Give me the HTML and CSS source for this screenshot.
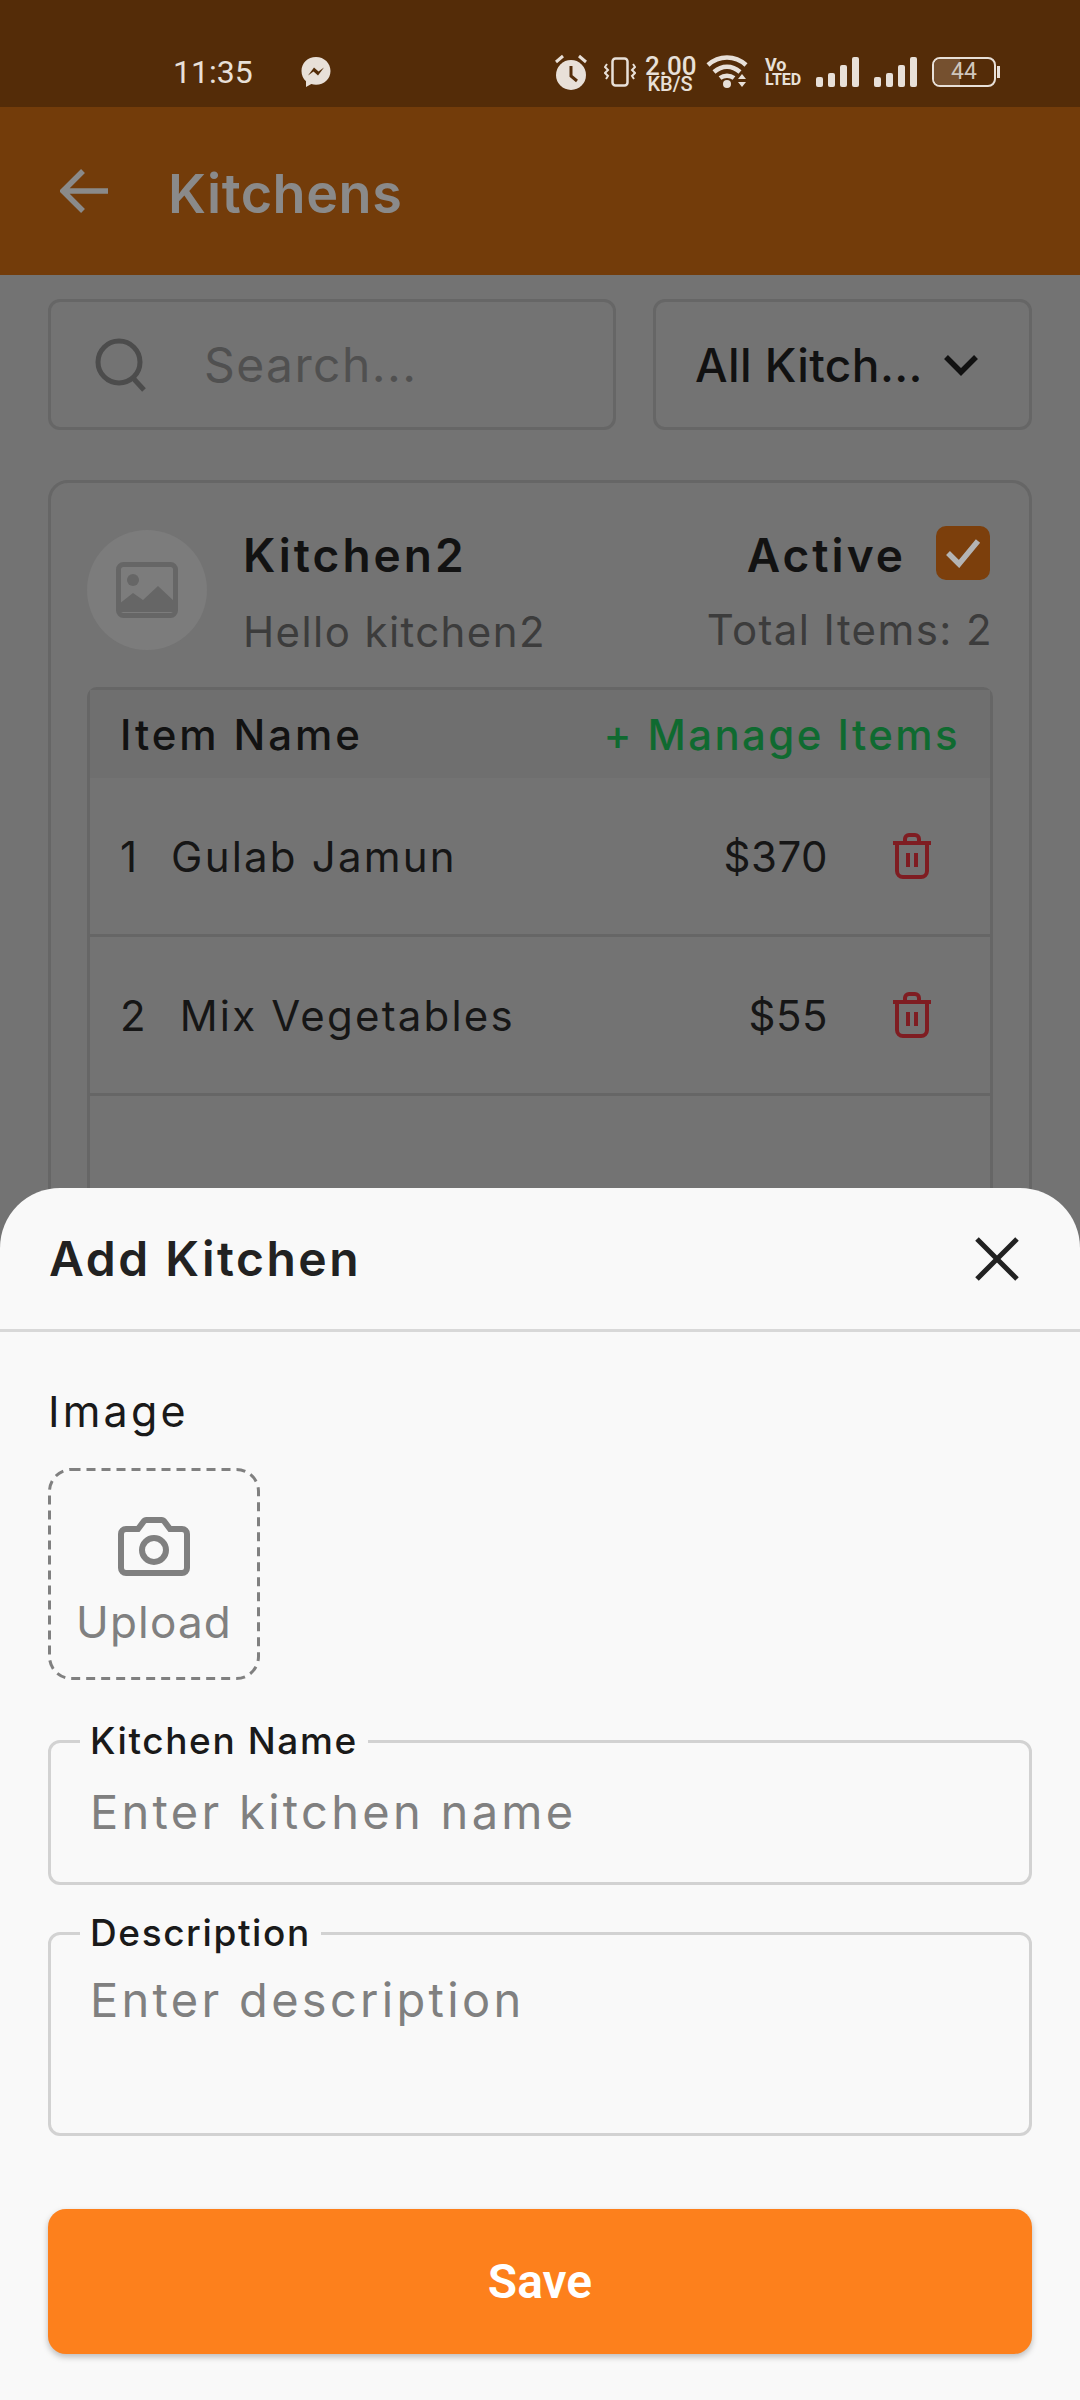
FILE: index.html
```html
<!DOCTYPE html>
<html lang="en">
<head>
  <meta charset="UTF-8">
  <meta name="viewport" content="width=device-width, initial-scale=1.0">
  <title>Kitchens</title>
  <link rel="stylesheet" href="styles.css">
</head>
<body>
  <div class="screen">
    <div class="status-bar">
      <span class="time">11:35</span>
      <svg class="messenger" width="32" height="32" viewBox="0 0 32 32">
        <path d="M16 1C7.700 1 1.500 7 1.500 15c0 4.200 1.700 7.800 4.500 10.300V31l5.300-2.900c1.500.4 3 .6 4.700.6 8.300 0 14.500-6 14.500-13.700S24.300 1 16 1z" fill="#e8e0d8"/>
        <path d="M8 19.500l6-8 4.500 4 5.500-4-6 8-4.500-4z" fill="#542c08"/>
      </svg>
      <div class="status-icons">
        <svg class="icon-alarm" width="36" height="38" viewBox="0 0 36 38">
          <circle cx="18" cy="22" r="15" fill="#e8e0d8"/>
          <path d="M18 13v10l6 5" fill="none" stroke="#542c08" stroke-width="3"/>
          <path d="M3 9l7-6M33 9l-7-6" stroke="#e8e0d8" stroke-width="3"/>
        </svg>
        <svg class="icon-vibrate" width="32" height="30" viewBox="0 0 32 30">
          <rect x="8.500" y="1.500" width="15" height="27" rx="3" fill="none" stroke="#e8e0d8" stroke-width="2.500"/>
          <path d="M3 7l-2 3 3 3-3 3 3 3-2 3M29 7l2 3-3 3 3 3-3 3 2 3" fill="none" stroke="#e8e0d8" stroke-width="2"/>
        </svg>
        <div class="speed">2.00<br>KB/S</div>
        <svg class="icon-wifi" width="44" height="34" viewBox="0 0 44 34">
          <path d="M2 10c11-10 27-10 38 0M8 17c8-7 18-7 26 0M14 23c4-3 10-3 14 0" fill="none" stroke="#e8e0d8" stroke-width="4.500"/>
          <circle cx="21" cy="29" r="4" fill="#e8e0d8"/>
          <path d="M32 24l4-5 4 5zM32 27l4 5 4-5z" fill="#e8e0d8"/>
        </svg>
        <div class="volte">Vo<br>LTED</div>
        <div class="signal"><i class="b1"></i><i class="b2"></i><i class="b3"></i><i class="b4"></i></div>
        <div class="signal"><i class="b1"></i><i class="b2"></i><i class="b3"></i><i class="b4"></i></div>
        <div class="battery"><div class="battery-level"></div><span class="battery-text">44</span></div>
        <div class="battery-nub"></div>
      </div>
    </div>

    <div class="app-bar">
      <svg width="48" height="46" viewBox="0 0 48 46">
        <path d="M23 3L3 23l20 20M3 23h45" fill="none" stroke="#8a8a8a" stroke-width="5.500"/>
      </svg>
      <span class="app-title">Kitchens</span>
    </div>

    <div class="content">
      <div class="filters">
        <div class="search-box">
          <svg width="52" height="54" viewBox="0 0 52 54">
            <circle cx="24" cy="24" r="21" fill="none" stroke="#4c4c4c" stroke-width="5"/>
            <path d="M38 40l11 12" stroke="#4c4c4c" stroke-width="5"/>
          </svg>
          <span class="search-text">Search...</span>
        </div>
        <div class="dropdown">
          <span>All Kitch...</span>
          <svg width="36" height="22" viewBox="0 0 36 22">
            <path d="M3 3l15 15L33 3" fill="none" stroke="#111" stroke-width="5.500"/>
          </svg>
        </div>
      </div>

      <div class="card">
        <div class="card-head">
          <div class="avatar">
            <svg width="62" height="56" viewBox="0 0 62 56">
              <rect x="2.500" y="2.500" width="57" height="51" rx="5" fill="none" stroke="#666" stroke-width="5"/>
              <circle cx="17" cy="18" r="6" fill="#666"/>
              <path d="M3 50V42l14-11 10 7 15-14 17 16v10z" fill="#666"/>
            </svg>
          </div>
          <div class="card-info">
            <div class="card-title">Kitchen2</div>
            <div class="card-desc">Hello kitchen2</div>
          </div>
          <div class="card-side">
            <div class="active-row">
              <span class="card-title">Active</span>
              <div class="checkbox">
                <svg width="36" height="30" viewBox="0 0 36 30">
                  <path d="M3 15l11 11L33 3" fill="none" stroke="#b4b4b4" stroke-width="5.500"/>
                </svg>
              </div>
            </div>
            <div class="total">Total Items: 2</div>
          </div>
        </div>

        <div class="items">
          <div class="items-head">
            <span class="items-label">Item Name</span>
            <span class="manage">+ Manage Items</span>
          </div>
          <div class="item-row">
            <span class="item-no">1</span>
            <span class="item-name">Gulab Jamun</span>
            <span class="item-price">$370</span>
            <svg class="trash" width="40" height="46" viewBox="0 0 40 46">
              <path d="M1 10h38M13 9V6a4 4 0 0 1 4-4h6a4 4 0 0 1 4 4v3M5 11v27a6 6 0 0 0 6 6h18a6 6 0 0 0 6-6V11M16 20v14M24 20v14" fill="none" stroke="#7f1d22" stroke-width="4"/>
            </svg>
          </div>
          <div class="item-row">
            <span class="item-no">2</span>
            <span class="item-name">Mix Vegetables</span>
            <span class="item-price">$55</span>
            <svg class="trash" width="40" height="46" viewBox="0 0 40 46">
              <path d="M1 10h38M13 9V6a4 4 0 0 1 4-4h6a4 4 0 0 1 4 4v3M5 11v27a6 6 0 0 0 6 6h18a6 6 0 0 0 6-6V11M16 20v14M24 20v14" fill="none" stroke="#7f1d22" stroke-width="4"/>
            </svg>
          </div>
        </div>
      </div>
    </div>

    <div class="sheet">
      <div class="sheet-head">
        <span class="sheet-title">Add Kitchen</span>
        <svg width="44" height="44" viewBox="0 0 44 44">
          <path d="M2 2l40 40M42 2L2 42" stroke="#222" stroke-width="5"/>
        </svg>
      </div>
      <div class="sheet-body">
        <div class="image-label">Image</div>
        <div class="upload">
          <svg class="upload-border" width="212" height="212" viewBox="0 0 212 212">
            <rect x="1.500" y="1.500" width="209" height="209" rx="22" fill="none" stroke="#808080" stroke-width="3" stroke-dasharray="9 6"/>
          </svg>
          <svg width="72" height="60" viewBox="0 0 72 60">
            <path d="M8 12h12l6-8a4 4 0 0 1 3-1h14a4 4 0 0 1 3 1l6 8h12a5 5 0 0 1 5 5v34a5 5 0 0 1-5 5H8a5 5 0 0 1-5-5V17a5 5 0 0 1 5-5z" fill="none" stroke="#808080" stroke-width="6"/>
            <circle cx="36" cy="33" r="12" fill="none" stroke="#808080" stroke-width="6"/>
          </svg>
          <span class="upload-text">Upload</span>
        </div>
        <fieldset class="field field-name">
          <legend>Kitchen Name</legend>
          <div class="placeholder">Enter kitchen name</div>
        </fieldset>
        <fieldset class="field field-desc">
          <legend>Description</legend>
          <div class="placeholder">Enter description</div>
        </fieldset>
        <button class="save">Save</button>
      </div>
    </div>
  </div>
</body>
</html>
```

FILE: styles.css
```css
* {
  box-sizing: border-box;
}

body {
  margin: 0;
  font-family: "Inter", "Noto Sans", sans-serif;
  color: #121212;
}

.screen {
  position: relative;
  width: 1080px;
  height: 2400px;
  overflow: hidden;
  background-color: #737373;
}

.status-bar {
  display: flex;
  align-items: center;
  height: 107px;
  padding: 36px 80px 0 173px;
  background-color: #542c08;
  color: #e8e0d8;
}

.time {
  width: 127px;
  font-family: "Roboto", sans-serif;
  font-size: 32px;
}

.status-icons {
  display: flex;
  align-items: center;
  margin-left: auto;
}

.icon-alarm { margin-right: 15px; }
.icon-vibrate { margin-right: 9px; }
.icon-wifi { margin-right: 15px; }

.speed {
  width: 50px;
  margin: 6px 11px 0 0;
  font-family: "Roboto", sans-serif;
  font-size: 20px;
  font-weight: 500;
  line-height: 18px;
  text-align: center;
  white-space: nowrap;
}

.speed::first-line {
  font-size: 26px;
}

.volte {
  width: 36px;
  margin-right: 15px;
  font-family: "Roboto", sans-serif;
  font-size: 16px;
  font-weight: 700;
  line-height: 15px;
}

.volte::first-line {
  font-size: 18px;
}

.signal {
  display: flex;
  align-items: flex-end;
  gap: 5px;
  height: 30px;
  margin-right: 15px;
}

.signal i {
  width: 7px;
  background-color: #e8e0d8;
  border-radius: 2px;
}

.signal .b1 { height: 10px; }
.signal .b2 { height: 14px; }
.signal .b3 { height: 22px; }
.signal .b4 { height: 30px; }

.battery {
  position: relative;
  width: 64px;
  height: 30px;
  border: 2.500px solid #e8e0d8;
  border-radius: 8px;
  overflow: hidden;
}

.battery-level {
  width: 44%;
  height: 100%;
  background-color: #75502f;
}

.battery-text {
  position: absolute;
  top: 0;
  left: 0;
  width: 100%;
  text-align: center;
  font-family: "Roboto", sans-serif;
  font-size: 23px;
  line-height: 25px;
  color: #cfc6bd;
}

.battery-nub {
  width: 3px;
  height: 12px;
  margin-left: 1px;
  background-color: #e8e0d8;
}

.app-bar {
  display: flex;
  align-items: center;
  gap: 60px;
  height: 168px;
  padding: 0 0 0 60px;
  background-color: #733c0a;
}

.app-title {
  margin-top: 4px;
  font-size: 54px;
  font-weight: 600;
  letter-spacing: 0.500px;
  color: #8a8a8a;
}

.content {
  padding: 24px 48px 0;
}

.filters {
  display: flex;
  gap: 37px;
}

.search-box,
.dropdown {
  display: flex;
  align-items: center;
  height: 131px;
  border: 3px solid #666;
  border-radius: 12px;
}

.search-box {
  width: 568px;
  padding-left: 44px;
}

.search-text {
  margin-left: 57px;
  font-size: 48px;
  letter-spacing: 1.400px;
  color: #505050;
}

.dropdown {
  flex: 1;
  padding-left: 39px;
  font-size: 46px;
  font-weight: 500;
  letter-spacing: 0.400px;
  white-space: nowrap;
  color: #111;
}

.dropdown svg {
  margin-left: 20px;
}

.card {
  height: 1000px;
  margin-top: 50px;
  padding: 47px 36px 0;
  border: 3px solid #666;
  border-radius: 20px;
}

.card-head {
  display: flex;
  align-items: flex-start;
}

.avatar {
  display: flex;
  align-items: center;
  justify-content: center;
  width: 120px;
  height: 120px;
  border-radius: 50%;
  background-color: #7c7c7c;
}

.card-info {
  margin-left: 36px;
}

.card-title {
  font-size: 46px;
  font-weight: 600;
  letter-spacing: 3px;
  line-height: 50px;
}

.card-desc,
.total {
  margin-top: 27px;
  font-size: 42px;
  letter-spacing: 1.400px;
  line-height: 50px;
  color: #3c3c3c;
}

.card-side {
  display: flex;
  flex-direction: column;
  align-items: flex-end;
  margin-left: auto;
}

.active-row {
  display: flex;
  align-items: center;
  gap: 30px;
  margin-right: 3px;
}

.checkbox {
  display: flex;
  align-items: center;
  justify-content: center;
  width: 54px;
  height: 54px;
  margin-top: -4px;
  border-radius: 10px;
  background-color: #7c3f0c;
}

.total {
  margin-top: 25px;
}

.items {
  height: 800px;
  margin-top: 30px;
  border: 3px solid #666;
  border-radius: 10px;
}

.items-head {
  display: flex;
  align-items: center;
  justify-content: space-between;
  height: 88px;
  padding: 0 30px;
  background-color: #6f6f6f;
  font-size: 42px;
  font-weight: 500;
}

.items-label {
  letter-spacing: 2.900px;
}

.manage {
  letter-spacing: 2.400px;
  color: #0f6a30;
}

.item-row {
  display: flex;
  align-items: center;
  height: 159px;
  padding: 0 58px 0 30px;
  border-bottom: 3px solid #666;
  font-size: 42px;
  color: #161616;
}

.item-name {
  margin-left: 34px;
  letter-spacing: 2.200px;
}

.item-price {
  margin-left: auto;
  letter-spacing: 0.500px;
}

.trash {
  margin-left: 64px;
}

.sheet {
  position: absolute;
  left: 0;
  right: 0;
  bottom: 0;
  height: 1212px;
  border-radius: 60px 60px 0 0;
  background-color: #f9f9f9;
}

.sheet-head {
  display: flex;
  align-items: center;
  justify-content: space-between;
  height: 144px;
  padding: 0 61px 0 49px;
  border-bottom: 3px solid #d8d8d8;
}

.sheet-title {
  font-size: 48px;
  font-weight: 600;
  letter-spacing: 2.500px;
  color: #222;
}

.sheet-body {
  padding: 54px 48px 0;
}

.image-label {
  font-size: 43px;
  letter-spacing: 3.200px;
  line-height: 50px;
  color: #1a1a1a;
}

.upload {
  position: relative;
  display: flex;
  flex-direction: column;
  align-items: center;
  width: 212px;
  height: 212px;
  margin-top: 32px;
  padding-top: 49px;
}

.upload-border {
  position: absolute;
  top: 0;
  left: 0;
}

.upload-text {
  margin-top: 18px;
  font-size: 44px;
  letter-spacing: 1.200px;
  color: #808080;
}

.field {
  margin: 38px 0 0;
  padding: 0 39px;
  border: 3px solid #d2d2d2;
  border-radius: 12px;
}

.field legend {
  margin-left: -10px;
  padding: 0 10px;
  font-size: 37px;
  font-weight: 500;
  letter-spacing: 1.600px;
  line-height: 46px;
  color: #1a1a1a;
}

.field-name {
  height: 167px;
}

.field-desc {
  height: 226px;
  margin-top: 25px;
}

.placeholder {
  margin-top: 19px;
  font-size: 47px;
  letter-spacing: 3.300px;
  color: #808080;
}

.field-desc .placeholder {
  margin-top: 15px;
}

.save {
  display: block;
  width: 100%;
  height: 145px;
  margin-top: 73px;
  border: 0;
  border-radius: 18px;
  background-color: #fd801c;
  box-shadow: 0 3px 6px rgba(0, 0, 0, 0.25);
  font-family: "Roboto", sans-serif;
  font-size: 48px;
  font-weight: 600;
  color: #fff;
}
```
